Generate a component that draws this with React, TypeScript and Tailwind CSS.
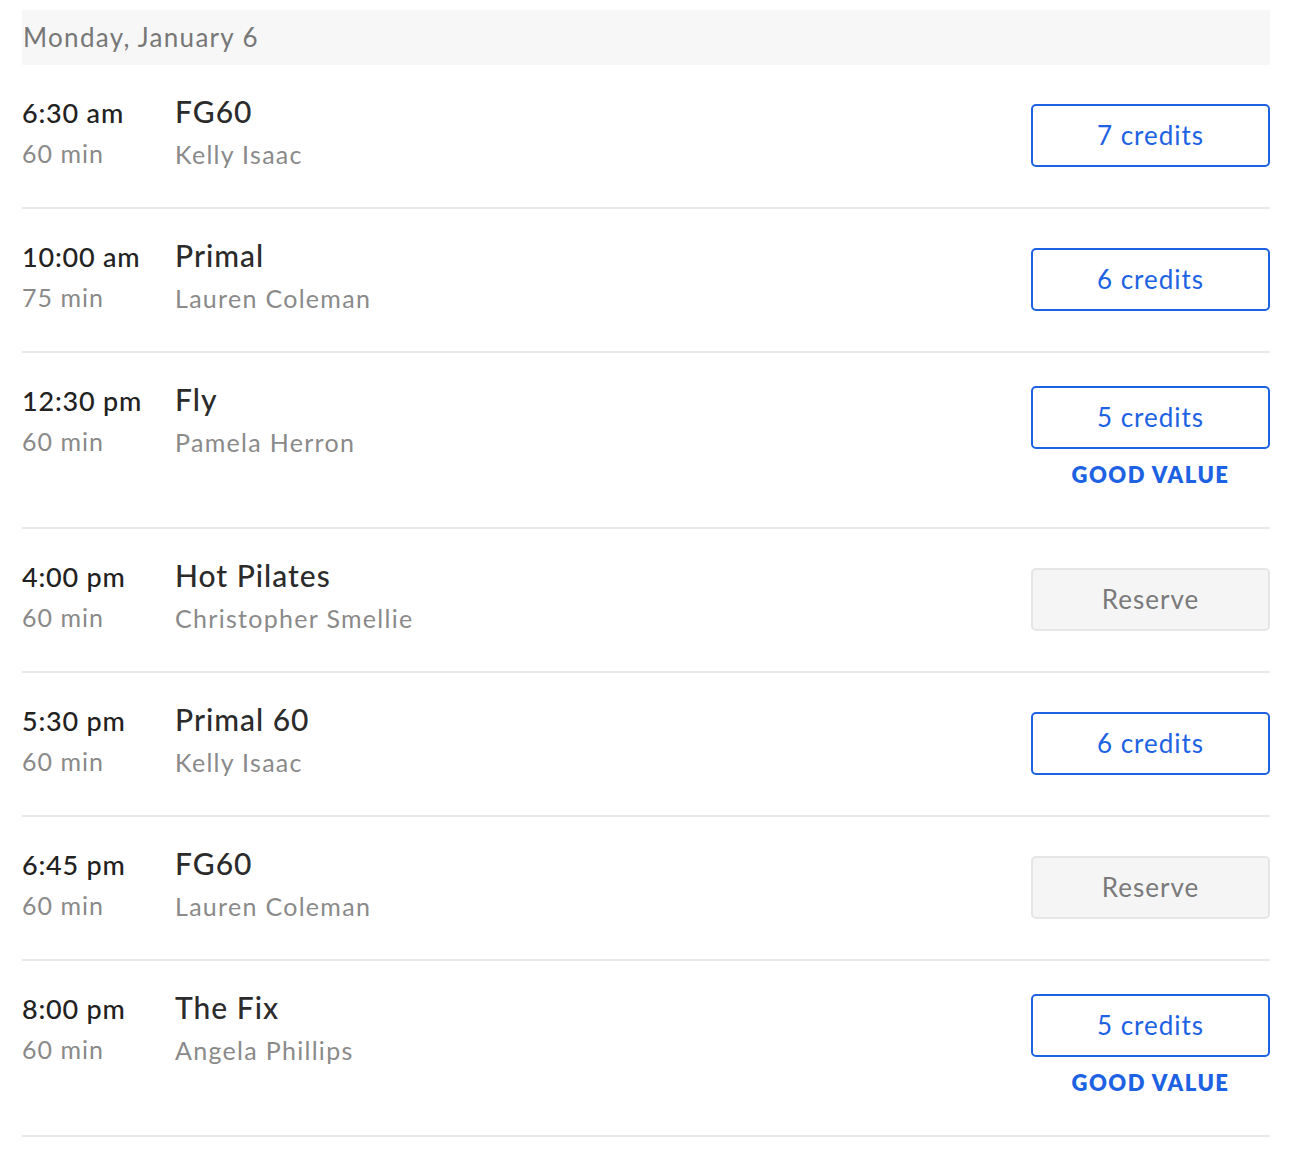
type ClassRow = {
  time: string;
  duration: string;
  title: string;
  instructor: string;
  credits?: number;
  goodValue?: boolean;
};

const rows: ClassRow[] = [
  { time: "6:30 am", duration: "60 min", title: "FG60", instructor: "Kelly Isaac", credits: 7 },
  { time: "10:00 am", duration: "75 min", title: "Primal", instructor: "Lauren Coleman", credits: 6 },
  { time: "12:30 pm", duration: "60 min", title: "Fly", instructor: "Pamela Herron", credits: 5, goodValue: true },
  { time: "4:00 pm", duration: "60 min", title: "Hot Pilates", instructor: "Christopher Smellie" },
  { time: "5:30 pm", duration: "60 min", title: "Primal 60", instructor: "Kelly Isaac", credits: 6 },
  { time: "6:45 pm", duration: "60 min", title: "FG60", instructor: "Lauren Coleman" },
  { time: "8:00 pm", duration: "60 min", title: "The Fix", instructor: "Angela Phillips", credits: 5, goodValue: true },
];

function ScheduleRow({ row }: { row: ClassRow }) {
  return (
    <div className="flex items-start border-b-2 border-[#e8e8e8] pt-[28px] pb-[40px]">
      <div className="w-[153px] shrink-0">
        <div className="text-[27px] font-medium leading-[40px] tracking-[0.8px] text-[#222]">{row.time}</div>
        <div className="mt-[7px] text-[25px] leading-[26px] tracking-[1px] text-[#8a8a8a]">{row.duration}</div>
      </div>
      <div className="flex-1">
        <div className="text-[30px] font-medium leading-[36px] tracking-[1px] text-[#2b2b2b]">{row.title}</div>
        <div className="mt-[12px] text-[25px] leading-[26px] tracking-[1.3px] text-[#8a8a8a]">{row.instructor}</div>
      </div>
      <div className={row.goodValue ? "mt-[5px] w-[239px]" : "mt-[11px] w-[239px]"}>
        {row.credits ? (
          <button className="flex h-[63px] w-full items-center justify-center rounded-[5px] border-2 border-[#1d62e2] bg-white text-[26px] tracking-[1px] text-[#1d62e2]">
            {row.credits} credits
          </button>
        ) : (
          <button className="flex h-[63px] w-full items-center justify-center rounded-[5px] border-2 border-[#e6e6e6] bg-[#f5f5f5] text-[26px] tracking-[1px] text-[#7a7a7a]">
            Reserve
          </button>
        )}
        {row.goodValue && (
          <div className="mt-[13px] text-center text-[22px] font-extrabold leading-[25px] tracking-[1.5px] text-[#1d62e2]">
            GOOD VALUE
          </div>
        )}
      </div>
    </div>
  );
}

export default function App() {
  return (
    <div className="min-h-screen bg-white pt-[10px] font-['Lato',sans-serif]">
      <div className="ml-[22px] w-[1248px]">
        <div className="flex h-[55px] items-center bg-[#f7f7f7] pl-[1px] text-[26px] tracking-[1.3px] text-[#777]">
          Monday, January 6
        </div>
        {rows.map((row, i) => (
          <ScheduleRow key={i} row={row} />
        ))}
      </div>
    </div>
  );
}
